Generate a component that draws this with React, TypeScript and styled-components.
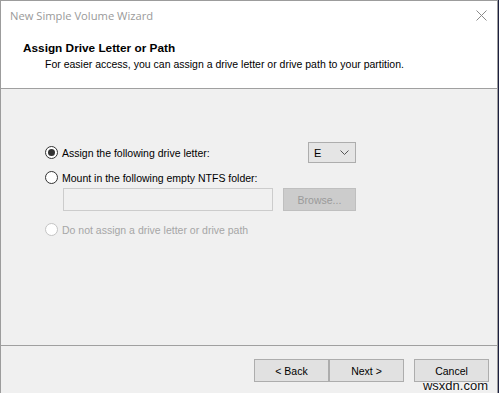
import React from "react";
import styled, { createGlobalStyle } from "styled-components";

const Global = createGlobalStyle`
  html, body { margin: 0; padding: 0; background: #1c2040; }
  body { font-family: "Liberation Sans", Arial, sans-serif; }
`;

const Window = styled.div`
  position: relative;
  box-sizing: border-box;
  width: 498px;
  height: 393px;
  border: 1px solid #9c9c9c;
  border-bottom: none;
  background: #f0f0f0;
  display: flex;
  flex-direction: column;
  overflow: hidden;
`;

const TitleBar = styled.div`
  height: 29px;
  background: #ffffff;
  display: flex;
  align-items: center;
  justify-content: space-between;
  padding: 0 10px 0 9px;
`;

const TitleText = styled.span`
  font-family: "Open Sans", "Noto Sans", sans-serif;
  font-size: 11.2px;
  color: #9a9a9a;
  margin-top: -1px;
`;

const CloseIcon = styled.svg`
  width: 11px;
  height: 11px;
`;

const Header = styled.div`
  height: 59px;
  box-sizing: border-box;
  background: #ffffff;
  border-bottom: 1px solid #a0a0a0;
  padding: 11px 0 0 22px;
`;

const Heading = styled.div`
  font-weight: bold;
  font-size: 11.8px;
  color: #000;
  line-height: 14px;
`;

const SubHeading = styled.div`
  font-size: 10.5px;
  color: #000;
  line-height: 13px;
  margin-top: 3px;
  padding-left: 22px;
`;

const Body = styled.div`
  flex: 1;
  box-sizing: border-box;
  padding: 53px 0 0 44px;
  border-bottom: 1px solid #a0a0a0;
  display: flex;
  flex-direction: column;
`;

const LetterRow = styled.div`
  width: 311px;
  height: 21px;
  display: flex;
  align-items: center;
  justify-content: space-between;
`;

const OptionRow = styled.div<{ $top: number }>`
  height: 15px;
  margin-top: ${(p) => p.$top}px;
  display: flex;
  align-items: center;
  gap: 4px;
`;

const Radio = styled.span<{ $checked?: boolean; $disabled?: boolean }>`
  box-sizing: border-box;
  width: 13px;
  height: 13px;
  border-radius: 50%;
  border: 1px solid ${(p) => (p.$disabled ? "#c4c4c4" : "#333333")};
  background: #ffffff;
  display: flex;
  align-items: center;
  justify-content: center;
  flex-shrink: 0;
  &::after {
    content: "";
    display: ${(p) => (p.$checked ? "block" : "none")};
    width: 7px;
    height: 7px;
    border-radius: 50%;
    background: #333333;
  }
`;

const Label = styled.span<{ $disabled?: boolean }>`
  font-size: 10.5px;
  color: ${(p) => (p.$disabled ? "#a6a6a6" : "#000")};
  white-space: nowrap;
`;

const Combo = styled.div`
  box-sizing: border-box;
  width: 48px;
  height: 21px;
  border: 1px solid #adadad;
  background: #e5e5e5;
  display: flex;
  align-items: center;
  justify-content: space-between;
  padding: 0 6px 0 5px;
  font-size: 11px;
  color: #000;
`;

const FolderRow = styled.div`
  display: flex;
  align-items: flex-start;
  gap: 10px;
  margin-top: 3px;
  padding-left: 18px;
`;

const FolderInput = styled.div`
  box-sizing: border-box;
  width: 210px;
  height: 23px;
  border: 1px solid #cccccc;
  background: #f0f0f0;
`;

const Button = styled.div<{ $disabled?: boolean; $w?: number }>`
  box-sizing: border-box;
  width: ${(p) => p.$w ?? 75}px;
  height: 23px;
  border: 1px solid ${(p) => (p.$disabled ? "#bfbfbf" : "#adadad")};
  background: ${(p) => (p.$disabled ? "#cccccc" : "#e1e1e1")};
  color: ${(p) => (p.$disabled ? "#9a9a9a" : "#000")};
  font-size: 10.5px;
  display: flex;
  align-items: center;
  justify-content: center;
`;

const Footer = styled.div`
  height: 47px;
  box-sizing: border-box;
  display: flex;
  align-items: flex-start;
  justify-content: flex-end;
  padding: 13px 8px 0 0;
`;

const NavGroup = styled.div`
  display: flex;
  margin-right: 10px;
`;

const Watermark = styled.span`
  position: absolute;
  right: 9px;
  bottom: 1px;
  font-family: "Liberation Sans", Arial, sans-serif;
  font-size: 13px;
  line-height: 13px;
  color: #111;
  text-shadow: 0 0 2px #fff, 0 0 2px #fff;
`;

export default function App() {
  return (
    <>
      <Global />
      <Window>
        <TitleBar>
          <TitleText>New Simple Volume Wizard</TitleText>
          <CloseIcon viewBox="0 0 11 11">
            <path d="M0.5 0.5 L10.5 10.5 M10.5 0.5 L0.5 10.5" stroke="#8a8a8a" strokeWidth="1" fill="none" />
          </CloseIcon>
        </TitleBar>
        <Header>
          <Heading>Assign Drive Letter or Path</Heading>
          <SubHeading>For easier access, you can assign a drive letter or drive path to your partition.</SubHeading>
        </Header>
        <Body>
          <LetterRow>
            <OptionRow $top={0}>
              <Radio $checked />
              <Label>Assign the following drive letter:</Label>
            </OptionRow>
            <Combo>
              <span>E</span>
              <svg width="9" height="5" viewBox="0 0 9 5">
                <path d="M0.5 0.5 L4.5 4.5 L8.5 0.5" stroke="#555" fill="none" />
              </svg>
            </Combo>
          </LetterRow>
          <OptionRow $top={7}>
            <Radio />
            <Label>Mount in the following empty NTFS folder:</Label>
          </OptionRow>
          <FolderRow>
            <FolderInput />
            <Button $disabled $w={73}>Browse...</Button>
          </FolderRow>
          <OptionRow $top={11}>
            <Radio $disabled />
            <Label $disabled>Do not assign a drive letter or drive path</Label>
          </OptionRow>
        </Body>
        <Footer>
          <NavGroup>
            <Button>&lt; Back</Button>
            <Button>Next &gt;</Button>
          </NavGroup>
          <Button>Cancel</Button>
        </Footer>
        <Watermark>wsxdn.com</Watermark>
      </Window>
    </>
  );
}
